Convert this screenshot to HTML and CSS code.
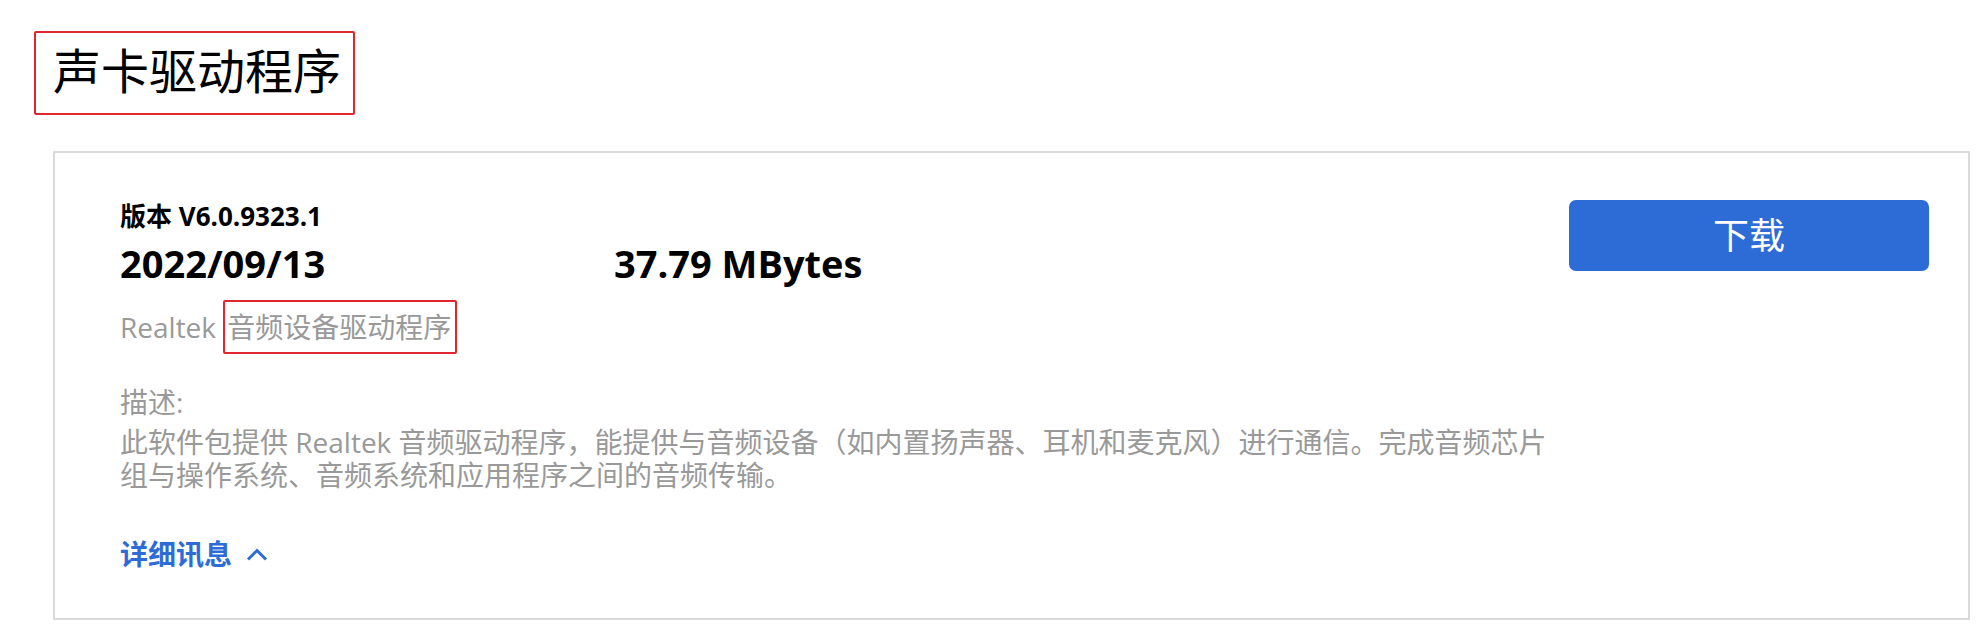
FILE: index.html
```html
<!DOCTYPE html>
<html lang="zh-CN">
<head>
    <meta charset="UTF-8">
    <meta name="viewport" content="width=device-width, initial-scale=1.0">
    <title>声卡驱动程序</title>
    <link rel="stylesheet" href="styles.css">
</head>
<body>
    <div class="page">
        <h1 class="title"><span class="mark">声卡驱动程序</span></h1>

        <div class="driver-card">
            <div class="driver-info">
                <div class="version">版本 V6.0.9323.1</div>
                <div class="meta">
                    <span class="date">2022/09/13</span>
                    <span class="size">37.79 MBytes</span>
                </div>
                <div class="vendor">Realtek <span class="mark mark-small">音频设备驱动程序</span></div>

                <div class="desc-label">描述:</div>
                <p class="desc">此软件包提供 Realtek 音频驱动程序，能提供与音频设备（如内置扬声器、耳机和麦克风）进行通信。完成音频芯片组与操作系统、音频系统和应用程序之间的音频传输。</p>

                <a class="more" href="#">详细讯息
                    <svg class="chevron" width="22" height="13" viewBox="0 0 22 13">
                        <polyline points="2,11.5 11,2.5 20,11.5" fill="none" stroke="#2d6bd6" stroke-width="3"/>
                    </svg>
                </a>
            </div>
            <a class="download" href="#">下载</a>
        </div>
    </div>
</body>
</html>
```

FILE: styles.css
```css
body {
    margin: 0;
    background-color: #fff;
    font-family: "Open Sans", "Noto Sans CJK SC", sans-serif;
    color: #000;
}
.page {
    padding: 31px 17px 0 34px;
}
.title {
    margin: 0;
    font-family: "Noto Sans CJK SC", sans-serif;
    font-size: 48px;
    font-weight: 400;
    line-height: 48px;
}
.mark {
    display: inline-block;
    border: 2px solid #e0262f;
    border-radius: 2px;
}
.title .mark {
    padding: 11px 12px 21px 17px;
}
.driver-card {
    display: flex;
    align-items: flex-start;
    margin: 36px 0 0 19px;
    padding: 47px 39px 47px 65px;
    border: 2px solid #dadada;
}
.driver-info {
    flex: 1;
}
.version {
    font-size: 26px;
    font-weight: 700;
    line-height: 32px;
}
.meta {
    display: flex;
    margin-top: 8px;
    font-size: 38px;
    font-weight: 700;
    line-height: 46px;
}
.date {
    width: 494px;
}
.vendor {
    margin-top: 14px;
    font-size: 28px;
    line-height: 50px;
    color: #999;
}
.mark-small {
    padding: 0 4px 0 2px;
    line-height: 50px;
}
.desc-label {
    margin-top: 32px;
    font-size: 28px;
    line-height: 33px;
    color: #999;
}
.desc {
    max-width: 1440px;
    margin: 7px 0 0;
    font-size: 28px;
    line-height: 33px;
    color: #999;
}
.more {
    display: inline-flex;
    align-items: center;
    gap: 14px;
    margin-top: 46px;
    font-size: 28px;
    font-weight: 700;
    line-height: 33px;
    color: #2d6bd6;
    text-decoration: none;
}
.download {
    width: 360px;
    height: 71px;
    border-radius: 7px;
    background-color: #2d6bd6;
    color: #fff;
    font-size: 36px;
    line-height: 71px;
    text-align: center;
    text-decoration: none;
}
```
